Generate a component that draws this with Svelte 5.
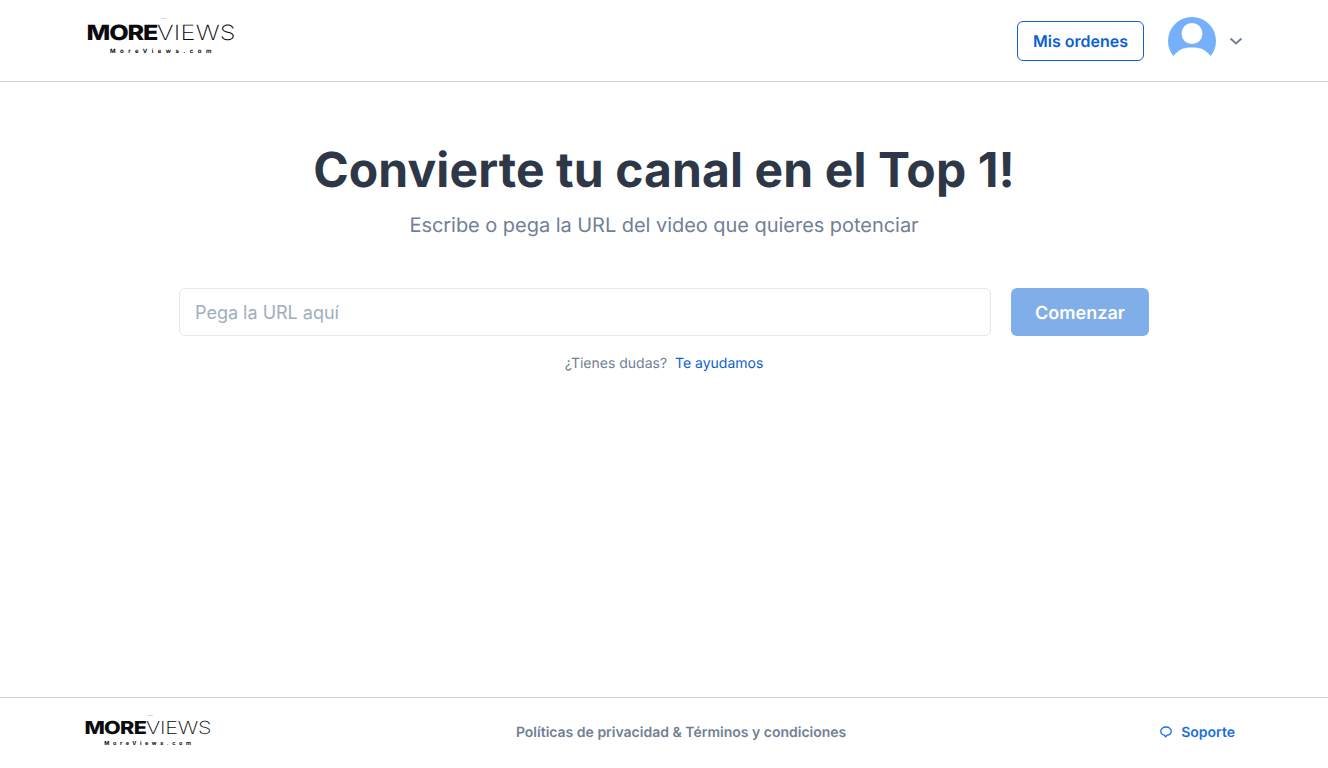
<script>
  let url = $state("");
</script>

{#snippet logo(cls)}
  <a class="logo {cls}" href="#top">
    <span class="wordmark"><b>MORE</b><span>VIEWS</span></span>
    <span class="domain">MoreViews.com</span>
  </a>
{/snippet}

<div class="page">
  <header>
    {@render logo("logo-lg")}
    <div class="actions">
      <button class="orders">Mis ordenes</button>
      <button class="user" aria-label="Cuenta">
        <svg class="avatar" width="48" height="48" viewBox="0 0 48 48">
          <circle cx="24" cy="24" r="24" fill="#76b0fb" />
          <circle cx="24" cy="16.500" r="10.500" fill="#fff" />
          <path d="M3 48V41.500C8 36 11 33 15 31.500 19 30 29 30 33 31.500 37 33 40 36 45 41.500V48Z" fill="#fff" />
        </svg>
        <svg class="chevron" width="16" height="16" viewBox="0 0 16 16" fill="none">
          <path d="M2.500 5.500 8 10.500 13.500 5.500" stroke="#718096" stroke-width="2" />
        </svg>
      </button>
    </div>
  </header>

  <main>
    <h1>Convierte tu canal en el Top 1!</h1>
    <p class="lead">Escribe o pega la URL del video que quieres potenciar</p>
    <form onsubmit={(e) => e.preventDefault()}>
      <input bind:value={url} placeholder="Pega la URL aquí" />
      <button class="start" type="submit">Comenzar</button>
    </form>
    <p class="help">¿Tienes dudas? <a href="#top">Te ayudamos</a></p>
  </main>

  <footer>
    {@render logo("logo-sm")}
    <a class="legal" href="#top">Políticas de privacidad &amp; Términos y condiciones</a>
    <a class="support" href="#top">
      <svg width="14" height="14" viewBox="0 0 14 14" fill="none">
        <path d="M7 2C4 2 1.800 3.700 1.800 6.200 1.800 8.300 3.400 9.800 5.500 10.200L6.600 12 8 10.200C10.500 9.900 12.200 8.300 12.200 6.200 12.200 3.700 10 2 7 2Z" stroke="#1a6fe0" stroke-width="1.300" stroke-linejoin="round" />
      </svg>
      Soporte
    </a>
  </footer>
</div>

<style>
  :global(body) {
    margin: 0;
    background: #fff;
    font-family: Inter, "Liberation Sans", sans-serif;
    text-rendering: geometricPrecision;
  }

  .page {
    height: 768px;
    display: flex;
    flex-direction: column;
  }

  a {
    text-decoration: none;
  }

  button {
    font-family: inherit;
    text-rendering: geometricPrecision;
    cursor: pointer;
  }

  header {
    height: 81px;
    flex: none;
    display: flex;
    align-items: center;
    justify-content: space-between;
    padding: 0 84px 0 88px;
    border-bottom: 1px solid #d4d4d4;
  }

  .logo {
    position: relative;
    display: flex;
    flex-direction: column;
    align-items: center;
    color: #0b0b0f;
  }

  /* faint speck above the E in the logo */
  .logo::before {
    content: "";
    position: absolute;
    top: -5px;
    left: 50%;
    width: 5px;
    height: 1px;
    background: #d3d6da;
  }

  .wordmark {
    display: inline-block;
    font-family: Inter, "Open Sans", sans-serif;
    white-space: nowrap;
    line-height: 1;
    transform: scaleX(1.2);
  }

  .wordmark b {
    font-weight: 800;
  }

  .wordmark span {
    font-weight: 200;
  }

  .domain {
    font-family: Inter, sans-serif;
    font-weight: 700;
    white-space: nowrap;
  }

  .logo-lg {
    width: 146px;
    margin-top: -4px;
  }

  .logo-lg .wordmark {
    font-size: 21px;
  }

  .logo-lg .wordmark b {
    letter-spacing: -1px;
  }

  .logo-lg .wordmark span {
    letter-spacing: 0.2px;
  }

  .logo-lg .domain {
    font-size: 6px;
    letter-spacing: 4.500px;
    line-height: 7px;
    margin-top: 4px;
    padding-left: 4px;
  }

  .logo-sm {
    width: 125px;
  }

  .logo-sm .wordmark {
    font-size: 18px;
  }

  .logo-sm .wordmark b {
    letter-spacing: -0.6px;
  }

  .logo-sm .wordmark span {
    letter-spacing: -0.2px;
  }

  .logo-sm .domain {
    font-size: 5.500px;
    letter-spacing: 3.600px;
    line-height: 6px;
    margin-top: 3px;
    padding-left: 4px;
  }

  .actions {
    display: flex;
    align-items: center;
    gap: 24px;
  }

  .orders {
    width: 127px;
    height: 40px;
    background: #fff;
    border: 1px solid #0b5fd7;
    border-radius: 6px;
    color: #0b5fd7;
    font-size: 16px;
    font-weight: 600;
    padding: 0;
  }

  .user {
    display: flex;
    align-items: center;
    gap: 12px;
    background: none;
    border: 0;
    padding: 0;
  }

  .avatar {
    display: block;
  }

  main {
    flex: 1;
    display: flex;
    flex-direction: column;
    align-items: center;
    padding-top: 58px;
  }

  h1 {
    margin: 0;
    font-size: 48px;
    line-height: 60px;
    font-weight: 700;
    letter-spacing: 0.1px;
    color: #2d3748;
    text-align: center;
  }

  .lead {
    margin: 10px 0 0;
    font-size: 20px;
    line-height: 30px;
    letter-spacing: -0.04px;
    color: #718096;
  }

  form {
    display: flex;
    gap: 20px;
    margin-top: 48px;
  }

  input {
    width: 812px;
    height: 48px;
    box-sizing: border-box;
    padding: 0 15px;
    border: 1px solid #e2e8f0;
    border-radius: 6px;
    font-family: inherit;
    font-size: 18px;
    color: #2d3748;
    outline: none;
  }

  input::placeholder {
    color: #a0aec0;
  }

  .start {
    width: 138px;
    height: 48px;
    border: 0;
    border-radius: 6px;
    padding: 2px 0 0;
    background: #80aee9;
    color: #fff;
    font-size: 18px;
    font-weight: 600;
  }

  .help {
    margin: 18px 0 0;
    font-size: 14px;
    line-height: 20px;
    color: #718096;
  }

  .help a {
    color: #0b5fd7;
    margin-left: 4px;
  }

  footer {
    height: 71px;
    flex: none;
    display: flex;
    align-items: center;
    justify-content: space-between;
    padding: 0 93px 0 85px;
    box-sizing: border-box;
    border-top: 1px solid #d4d4d4;
  }

  .legal {
    font-size: 14px;
    font-weight: 600;
    color: #718096;
    margin: 0 7px 2px 0;
  }

  .support {
    display: flex;
    align-items: center;
    gap: 8px;
    margin-bottom: 2px;
    font-size: 14px;
    font-weight: 600;
    color: #1a6fe0;
  }
</style>
